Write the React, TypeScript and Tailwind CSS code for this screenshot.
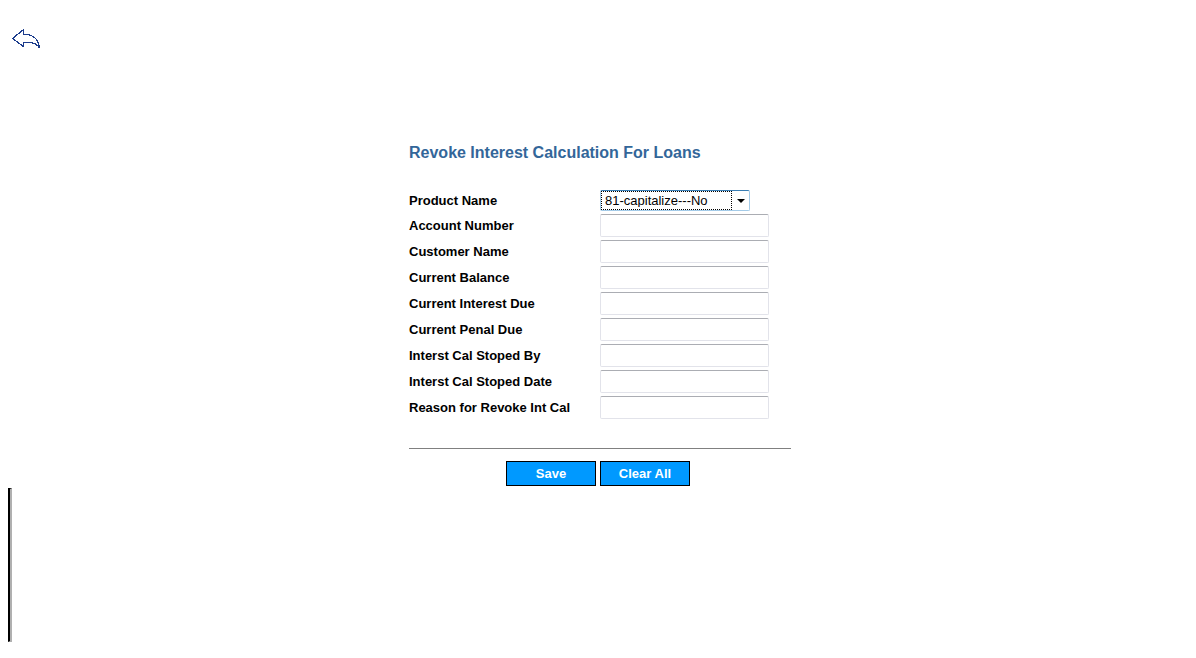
const fields = [
  { id: 'account-number', label: 'Account Number' },
  { id: 'customer-name', label: 'Customer Name' },
  { id: 'current-balance', label: 'Current Balance' },
  { id: 'current-interest-due', label: 'Current Interest Due' },
  { id: 'current-penal-due', label: 'Current Penal Due' },
  { id: 'stopped-by', label: 'Interst Cal Stoped By' },
  { id: 'stopped-date', label: 'Interst Cal Stoped Date' },
  { id: 'revoke-reason', label: 'Reason for Revoke Int Cal' },
];

function BackArrow() {
  return (
    <svg width="30" height="22" viewBox="0 0 30 22" fill="none" stroke="#1c3c8c" strokeWidth="1.2" shapeRendering="crispEdges" aria-hidden="true">
      <path d="M0.5 10.5 L11.5 1.5 V6 C16 6.3 19.5 7.3 22.5 9.5 C25.5 12 27 15.5 27.5 20 C25.5 16.5 20 13.5 11.5 14.5 V18.5 Z" />
      <path d="M26.5 17.5 L27.5 20.5" strokeWidth="1.8" />
    </svg>
  );
}

function FormButton({ children, type }: { children: string; type: 'submit' | 'reset' }) {
  return (
    <button type={type} className="h-[25px] w-[90px] border border-black bg-[#0099ff] text-[13px] font-bold leading-none text-white">
      {children}
    </button>
  );
}

export default function App() {
  return (
    <main className="min-h-screen bg-white font-['Liberation_Sans',Arial,sans-serif] text-black">
      <header className="px-3 pt-7">
        <a href="#back" aria-label="Back" className="inline-block align-top">
          <BackArrow />
        </a>
      </header>

      <form className="ml-1 flex justify-center pt-[91px]" onSubmit={(e) => e.preventDefault()}>
        <div className="w-full max-w-[382px]">
          <h1 className="text-base font-bold leading-5 text-[#336699]">Revoke Interest Calculation For Loans</h1>

          <div className="mt-[27px] flex flex-col gap-[3px]">
            <div className="flex items-center">
              <label htmlFor="product-name" className="w-1/2 text-[13px] font-bold leading-4">
                Product Name
              </label>
              <div className="relative">
                <select
                  id="product-name"
                  className="block h-[21px] w-[150px] appearance-none rounded-xs border border-[#a4cbe8] border-t-[#3b7fb5] bg-white pl-1 text-[13px] leading-none outline-none"
                >
                  <option>81-capitalize---No</option>
                </select>
                <span className="pointer-events-none absolute inset-y-px left-px w-[131px] border border-dotted border-black" />
                <svg className="pointer-events-none absolute right-[5px] top-[9px] h-[4px] w-[8px]" viewBox="0 0 8 4" aria-hidden="true">
                  <path d="M0 0H8L4 4Z" fill="#000" />
                </svg>
              </div>
            </div>
            {fields.map((field) => (
              <div key={field.id} className="flex items-center">
                <label htmlFor={field.id} className="w-1/2 text-[13px] font-bold leading-4">
                  {field.label}
                </label>
                <input
                  id={field.id}
                  type="text"
                  className="h-[23px] w-[169px] rounded-xs border border-[#e2e3ea] border-t-[#abadb3] bg-white px-1 text-[13px] outline-none"
                />
              </div>
            ))}
          </div>

          <hr className="mt-[29px] border-t border-[#808080]" />
          <div className="mt-3 flex justify-center gap-1 pr-1">
            <FormButton type="submit">Save</FormButton>
            <FormButton type="reset">Clear All</FormButton>
          </div>
        </div>
      </form>

      <div className="ml-2 mt-[2px] h-[154px] w-1 border-2 border-b border-t border-black border-r-[#b0b0b0] border-b-[#b0b0b0]" />
    </main>
  );
}
